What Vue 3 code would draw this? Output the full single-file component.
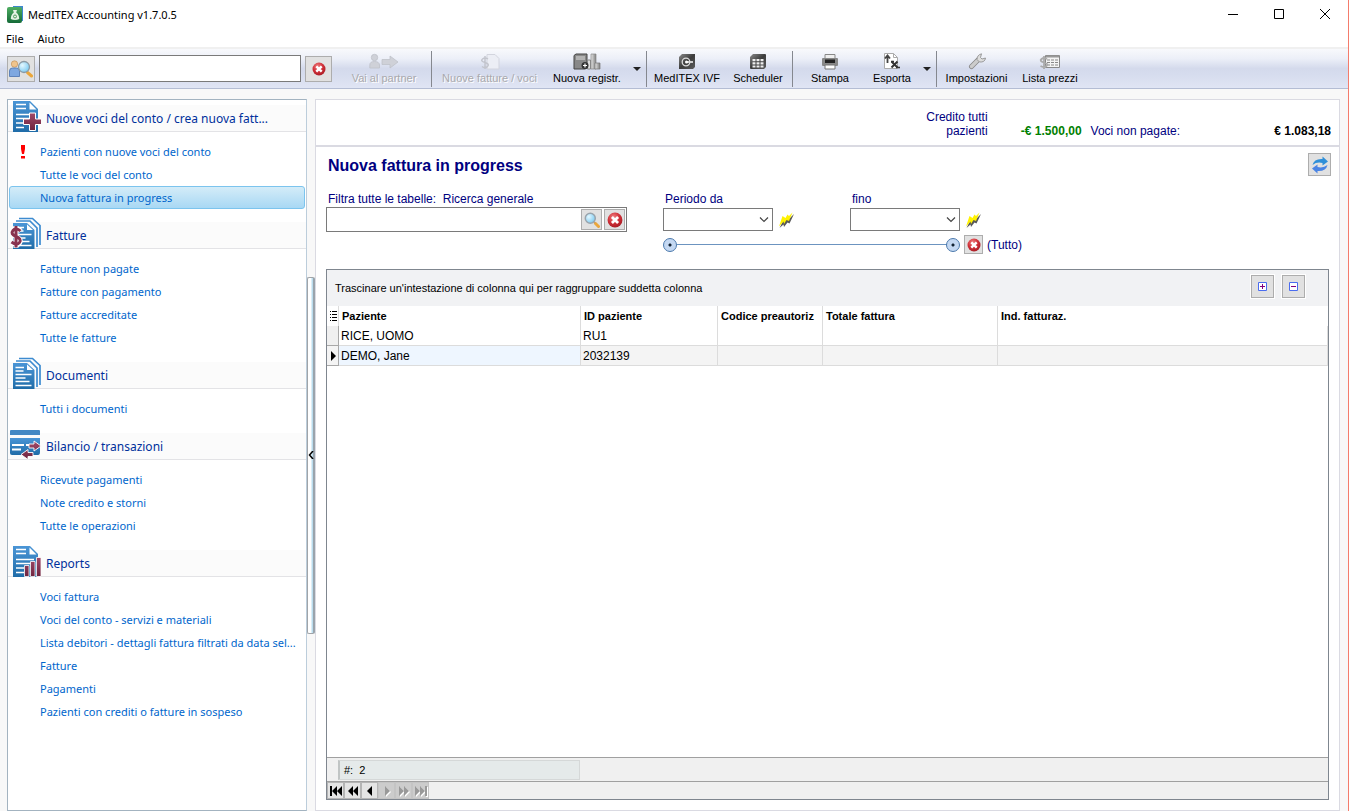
<template>
    <div class="window">
        <svg class="sprite" width="0" height="0" aria-hidden="true">
            <defs>
                <linearGradient id="blue" x1="0" y1="0" x2="0" y2="1">
                    <stop offset="0" stop-color="#4a95d6" />
                    <stop offset="1" stop-color="#1f6ca8" />
                </linearGradient>
                <linearGradient id="wine" x1="0" y1="0" x2="0" y2="1">
                    <stop offset="0" stop-color="#a04a68" />
                    <stop offset="1" stop-color="#6e2440" />
                </linearGradient>
                <linearGradient id="green" x1="0" y1="0" x2="0" y2="1">
                    <stop offset="0" stop-color="#4fae62" />
                    <stop offset="1" stop-color="#156b38" />
                </linearGradient>
                <linearGradient id="dark" x1="0" y1="0" x2="1" y2="1">
                    <stop offset="0" stop-color="#8a8a8a" />
                    <stop offset="0.5" stop-color="#3c3c3c" />
                    <stop offset="1" stop-color="#5c5c5c" />
                </linearGradient>
                <linearGradient id="grey" x1="0" y1="0" x2="1" y2="0">
                    <stop offset="0" stop-color="#e6e6e6" />
                    <stop offset="1" stop-color="#808080" />
                </linearGradient>
                <radialGradient id="red" cx="0.4" cy="0.3" r="0.8">
                    <stop offset="0" stop-color="#ef8080" />
                    <stop offset="0.5" stop-color="#d03038" />
                    <stop offset="1" stop-color="#a01820" />
                </radialGradient>
                <radialGradient id="lens" cx="0.35" cy="0.35" r="0.8">
                    <stop offset="0" stop-color="#e4f8ff" />
                    <stop offset="1" stop-color="#6cc4f0" />
                </radialGradient>
            </defs>
            <symbol id="i-clear" viewBox="0 0 14 14">
                <circle cx="7" cy="7" r="6.5" fill="url(#red)" />
                <path d="M4.3 4.3l5.4 5.4M9.7 4.3l-5.4 5.4" stroke="#fff" stroke-width="2.4" />
            </symbol>
            <symbol id="i-lens" viewBox="0 0 16 16">
                <path d="M10 10l1.5 1.5" stroke="#999" stroke-width="2" />
                <path d="M11.5 11.5l3 3" stroke="#eaa63c" stroke-width="3" stroke-linecap="round" />
                <circle cx="6.3" cy="6.3" r="5" fill="url(#lens)" stroke="#9aa4ac" stroke-width="1.5" />
            </symbol>
            <symbol id="i-bolt" viewBox="0 0 16 16">
                <path d="M16 2l-4.500 9.500-2-1L6 15l-.5-2.500L1.500 16 5 9l7-3z" fill="#222" opacity=".75" />
                <path d="M14.500.5L11 9 8.500 8 6 12 5.500 9.500 1 14.500 4.500 4l3 2L9.500 2.500l1.500 1.500z" fill="#fff200" />
            </symbol>
        </svg>

        <header class="titlebar">
            <svg class="app-icon" viewBox="0 0 16 17">
                <path d="M6 0h10v15H6z" fill="#3f87cf" />
                <rect x="0" y="1" width="15" height="16" rx="2" fill="url(#green)" />
                <path d="M6 4h4l-.8 2.500c2 1.500 3 3.500 3 6.500q-4.200 2-8.400 0c0-3 1-5 3-6.500z" fill="#e3f1e2" />
                <circle cx="8" cy="10.500" r="1.500" fill="none" stroke="#4f9c5c" />
            </svg>
            <span class="app-name">MedITEX Accounting v1.7.0.5</span>
            <div class="window-buttons">
                <button type="button" aria-label="Riduci a icona">
                    <svg viewBox="0 0 12 12"><path d="M1 6.500h10" /></svg>
                </button>
                <button type="button" aria-label="Ingrandisci">
                    <svg viewBox="0 0 12 12"><path d="M1.500 1.500h9v9h-9z" /></svg>
                </button>
                <button type="button" aria-label="Chiudi">
                    <svg viewBox="0 0 12 12"><path d="M1 1l10 10M11 1L1 11" /></svg>
                </button>
            </div>
        </header>

        <nav class="menubar">
            <button type="button">File</button>
            <button type="button">Aiuto</button>
        </nav>

        <div class="toolbar">
            <button type="button" class="box-button patient-search" aria-label="Cerca paziente">
                <svg viewBox="0 0 24 18">
                    <circle cx="5.500" cy="4" r="3.200" fill="#f0c48c" stroke="#c08c50" stroke-width=".6" />
                    <path d="M.5 16.500V11q0-3 3-3h4q3 0 3 3v5.500z" fill="#7fa8e0" stroke="#4a72b0" stroke-width=".8" />
                    <path d="M18.500 12.500l4 3.500" stroke="#eaa63c" stroke-width="3" stroke-linecap="round" />
                    <circle cx="15" cy="7" r="5.500" fill="url(#lens)" stroke="#8d9aa4" stroke-width="1.300" />
                </svg>
            </button>
            <input v-model="patientQuery" class="patient-input" type="text" aria-label="Paziente">
            <button type="button" class="box-button clear-patient" aria-label="Cancella" @click="patientQuery = ''">
                <svg viewBox="0 0 14 14"><use href="#i-clear" /></svg>
            </button>

            <button type="button" class="tool tool-partner" disabled>
                <svg viewBox="0 0 30 18">
                    <g fill="#cfd1d8" stroke="#bfc1c9" stroke-width=".8">
                        <circle cx="5.500" cy="4.500" r="3.200" />
                        <path d="M.8 15v-3q0-3.500 4.700-3.500t5 3.500v3z" />
                        <path d="M13 6.500h8V3l8 6-8 6v-3.500h-8z" />
                    </g>
                </svg>
                Vai al partner
            </button>
            <span class="divider"></span>
            <button type="button" class="tool tool-new" disabled>
                <svg viewBox="0 0 20 18">
                    <path d="M7 1.500h8l4 4V16H7z" fill="#eceef5" stroke="#d3d5de" />
                    <path d="M8 6q-3-2-5.500 0t2.500 3.500 2.500 4-5.500 0M5 3v13" fill="none" stroke="#c3c5cd" stroke-width="1.500" />
                </svg>
                Nuove fatture / voci
            </button>
            <button type="button" class="tool tool-register">
                <svg viewBox="0 0 28 18">
                    <path d="M1 2.500L3 1h11v14l-2 1H1z" fill="#888" stroke="#444" />
                    <path d="M3 4h9M3 6h9" stroke="#ddd" />
                    <path d="M14.500 7h3v9h-3z" fill="#ddd" stroke="#888" />
                    <path d="M18 1h5v15h-5z" fill="url(#grey)" stroke="#888" stroke-width=".7" />
                    <path d="M22 10h5v6h-5z" fill="url(#grey)" stroke="#777" stroke-width=".7" />
                    <circle cx="12" cy="12.500" r="3.500" fill="#333" />
                    <path d="M12 10.500v4M10 12.500h4" stroke="#fff" stroke-width="1.200" />
                </svg>
                Nuova registr.
            </button>
            <button type="button" class="arrow" aria-label="Altre registrazioni"></button>
            <span class="divider"></span>
            <button type="button" class="tool tool-ivf">
                <svg viewBox="0 0 18 18">
                    <path d="M4 1h13v13l-2 2H1V4z" fill="url(#dark)" />
                    <circle cx="8" cy="9" r="3.800" fill="none" stroke="#ddd" stroke-width="1.300" />
                    <path d="M8 9h7" stroke="#ddd" stroke-width="1.800" />
                    <circle cx="8.500" cy="9" r="1.500" fill="#fff" />
                </svg>
                MedITEX IVF
            </button>
            <button type="button" class="tool tool-scheduler">
                <svg viewBox="0 0 18 18">
                    <path d="M4 1h12q1 0 1 1v12l-2 2H2q-1 0-1-1V4z" fill="url(#dark)" />
                    <path d="M3.500 6h3v2.300h-3zm4 0h3v2.300h-3zm4 0h3v2.300h-3zm-8 3.300h3v2.300h-3zm4 0h3v2.300h-3zm4 0h3v2.300h-3zm-8 3.200h3v2h-3zm4 0h3v2h-3zm4 0h3v2h-3z" fill="#eee" />
                </svg>
                Scheduler
            </button>
            <span class="divider"></span>
            <button type="button" class="tool tool-print">
                <svg viewBox="0 0 18 18">
                    <path d="M4 1.500h10V7H4z" fill="#eee" stroke="#888" />
                    <rect x="1" y="5" width="16" height="8" rx="1" fill="#888" />
                    <path d="M4 6.500h10v3.500H4z" fill="#222" />
                    <path d="M4 12h10v4H4z" fill="#fff" stroke="#777" />
                </svg>
                Stampa
            </button>
            <button type="button" class="tool tool-export">
                <svg viewBox="0 0 18 18">
                    <path d="M1.500.5h9l4 4v11h-13z" fill="#fff" stroke="#aaa" />
                    <path d="M10.500.5v4h4" fill="none" stroke="#aaa" />
                    <path d="M4.500 10V3M2 5.500L4.500 2.500 7 5.500" fill="none" stroke="#444" stroke-width="1.800" />
                    <path d="M8.500 8.500l6 6M14.500 8.500l-6 6" stroke="#333" stroke-width="2" />
                    <path d="M8 8.500h3M13 14.500h4" stroke="#333" stroke-width="1.500" />
                </svg>
                Esporta
            </button>
            <button type="button" class="arrow" aria-label="Altre esportazioni"></button>
            <span class="divider"></span>
            <button type="button" class="tool tool-settings">
                <svg viewBox="0 0 18 18">
                    <path d="M3.500 13.500L10 7" stroke="#888" stroke-width="5" stroke-linecap="round" />
                    <path d="M3.500 13.500L10 7" stroke="#ccc" stroke-width="3.400" stroke-linecap="round" />
                    <path d="M9 6.500Q9 2 13.500.800L12.500 4.500l1.500 1.500 3.500-1Q17 9.500 11.500 9z" fill="#ddd" stroke="#888" stroke-width=".8" />
                </svg>
                Impostazioni
            </button>
            <button type="button" class="tool tool-prices">
                <svg viewBox="0 0 22 18">
                    <path d="M6.500 2.500h14v12h-14z" fill="#f4f4f4" stroke="#888" />
                    <path d="M7 3.500h13" stroke="#999" stroke-width="2" />
                    <path d="M8 7h11M8 9.500h11M8 12h11" stroke="#888" stroke-dasharray="3 1" />
                    <path d="M8 6Q5 4 2.500 6T5 9.500 7.500 13t-6 0M5 3v13" fill="none" stroke="#aaa" stroke-width="1.800" />
                </svg>
                Lista prezzi
            </button>
        </div>

        <div class="workspace">
            <aside class="sidebar">
                <section v-for="group in groups" :key="group.title" class="group">
                    <h2>
                        <svg class="group-icon" viewBox="0 0 32 32">
                            <template v-if="group.icon === 'add' || group.icon === 'report'">
                                <path d="M4 1h17l8 8v23H4z" fill="url(#blue)" />
                                <path d="M20.500 2.500v7h7z" fill="#fff" />
                                <path d="M7 4.500h10M7 8.500h10M7 14.500h18M7 18.500h18M7 23h8M7 27.500h8" stroke="#fff" stroke-width="1.600" />
                            </template>
                            <template v-else-if="group.icon === 'invoice' || group.icon === 'document'">
                                <path d="M10 1.500h13.500l7.500 7V28M7 4h14l7 7v19" fill="none" stroke="#3d8bd0" stroke-width="1.700" />
                                <path d="M4 6h14l7.500 7v19H4z" fill="url(#blue)" />
                                <path d="M18 7.500V13h6z" fill="#fff" />
                                <path d="M6.500 10.500h8.500M6.500 14h8M6.500 17.500h16M6.500 21h10M6.500 24.500h14M6.500 28.500h16" stroke="#fff" stroke-width="1.600" />
                            </template>
                            <template v-else>
                                <path d="M2 2h28q1 0 1 1v4H1V3q0-1 1-1z" fill="#4388c4" />
                                <path d="M1 10h30v14q0 3-2 3H3q-2 0-2-2z" fill="url(#blue)" />
                                <path d="M3 17h12M17 17h6M3 21.500h9" stroke="#fff" stroke-width="1.800" />
                            </template>
                            <path v-if="group.icon === 'add'" d="M20.500 13h6v6h6v5.500h-6v6h-6v-6h-6v-5.500h6z" fill="url(#wine)" stroke="#fff" />
                            <g v-if="group.icon === 'invoice'" fill="none">
                                <path d="M12 14Q7 9.500 4 13t3 6.500 3.500 6.500-8-.5M7 9v22" stroke="#fff" stroke-width="5" />
                                <path d="M11.500 14Q7 10 4 13.500t3 6 3.500 6-8-.5M7 9v21.500" stroke="#88324f" stroke-width="3" />
                            </g>
                            <path v-if="group.icon === 'balance'" d="M20 16h5v-3l7 5-7 5v-3h-5zM24 24.500h-5v-3l-7 5 7 5v-3h5z" fill="url(#wine)" stroke="#fff" stroke-width=".9" />
                            <path v-if="group.icon === 'report'" d="M15.500 20.500H20v11h-4.500zM21.500 16.500H26v15h-4.500zM27.500 12.500h4.500v19h-4.500z" fill="url(#wine)" stroke="#fff" stroke-width=".8" />
                        </svg>
                        <span>{{ group.title }}</span>
                    </h2>
                    <ul>
                        <li v-for="link in group.links" :key="link">
                            <a href="#" :class="{ selected: selected === group.icon + link }"
                                @click.prevent="selected = group.icon + link">
                                <svg v-if="link === alertLink" class="alert" viewBox="0 0 6 14">
                                    <path d="M1 0h4v4L4 9H2L1 4zM1 11h4v2.500H1z" fill="#f00" />
                                </svg>
                                <span>{{ link }}</span>
                            </a>
                        </li>
                    </ul>
                </section>
            </aside>

            <div class="splitter">
                <button type="button" aria-label="Comprimi pannello">
                    <svg viewBox="0 0 6 8"><path d="M5 0L1.500 4 5 8" fill="none" stroke="#000" stroke-width="1.500" /></svg>
                </button>
            </div>

            <main class="content">
                <div class="summary">
                    <span class="credit-label">Credito tutti pazienti</span>
                    <strong class="credit">-€ 1.500,00</strong>
                    <span class="unpaid-label">Voci non pagate:</span>
                    <strong class="unpaid">€ 1.083,18</strong>
                </div>

                <div class="heading">
                    <h1>Nuova fattura in progress</h1>
                    <button type="button" class="box-button refresh" aria-label="Aggiorna">
                        <svg viewBox="0 0 18 18">
                            <path d="M1.500 9Q3 2.500 11.500 3V.5L17 5.500l-5.500 4V7Q6 5.500 1.500 9z" fill="#2f8fd8" />
                            <path d="M16.500 9Q15 15.500 6.500 15v2.500L1 12.500l5.500-4V11q5.500 1.500 10-2z" fill="#4a84e4" />
                        </svg>
                    </button>
                </div>

                <div class="filters">
                    <div class="search">
                        <label for="search">Filtra tutte le tabelle:&nbsp; Ricerca generale</label>
                        <div class="search-box">
                            <input id="search" v-model="query" type="text">
                            <button type="button" class="box-button" aria-label="Cerca">
                                <svg viewBox="0 0 16 16"><use href="#i-lens" /></svg>
                            </button>
                            <button type="button" class="box-button" aria-label="Cancella filtro" @click="query = ''">
                                <svg viewBox="0 0 14 14"><use href="#i-clear" /></svg>
                            </button>
                        </div>
                    </div>
                    <div class="period">
                        <div class="dates">
                            <div v-for="date in dates" :key="date.id" class="date">
                                <label :for="date.id">{{ date.label }}</label>
                                <div class="date-row">
                                    <div class="select">
                                        <select :id="date.id">
                                            <option value=""></option>
                                        </select>
                                        <svg viewBox="0 0 10 6"><path d="M1 .5l4 4 4-4" fill="none" stroke="#444" stroke-width="1.200" /></svg>
                                    </div>
                                    <button type="button" class="bolt" aria-label="Imposta data">
                                        <svg viewBox="0 0 16 16"><use href="#i-bolt" /></svg>
                                    </button>
                                </div>
                            </div>
                        </div>
                        <div class="range-row">
                            <div class="range">
                                <input v-model="from" type="range" min="0" max="100" aria-label="Inizio periodo">
                                <input v-model="to" type="range" min="0" max="100" aria-label="Fine periodo">
                            </div>
                            <button type="button" class="box-button" aria-label="Azzera periodo" @click="resetRange">
                                <svg viewBox="0 0 14 14"><use href="#i-clear" /></svg>
                            </button>
                            <span>(Tutto)</span>
                        </div>
                    </div>
                </div>

                <div class="grid">
                    <div class="group-panel">
                        <span>Trascinare un'intestazione di colonna qui per raggruppare suddetta colonna</span>
                        <button type="button" class="box-button" aria-label="Espandi tutto">
                            <svg viewBox="0 0 9 9"><path d="M.5.5h8v8h-8z" fill="#fff" stroke="#4a6cf0" /><path d="M2 4.500h5M4.500 2v5" stroke="#800080" /></svg>
                        </button>
                        <button type="button" class="box-button" aria-label="Comprimi tutto">
                            <svg viewBox="0 0 9 9"><path d="M.5.5h8v8h-8z" fill="#fff" stroke="#4a6cf0" /><path d="M2 4.500h5" stroke="#800080" /></svg>
                        </button>
                    </div>
                    <div class="grid-body">
                        <table>
                            <colgroup>
                                <col class="col-mark">
                                <col class="col-patient">
                                <col class="col-id">
                                <col class="col-code">
                                <col class="col-total">
                                <col>
                            </colgroup>
                            <thead>
                                <tr>
                                    <th class="mark">
                                        <svg viewBox="0 0 7 10"><path d="M0 .5h1M0 3.500h1M0 6.500h1M0 9.500h1M2 .5h5M2 3.500h5M2 6.500h5M2 9.500h5" stroke="#000" /></svg>
                                    </th>
                                    <th v-for="column in columns" :key="column" scope="col">{{ column }}</th>
                                </tr>
                            </thead>
                            <tbody>
                                <tr v-for="row in rows" :key="row.id" :class="{ current: row.id === currentId }"
                                    @click="currentId = row.id">
                                    <td class="mark">
                                        <svg v-if="row.id === currentId" viewBox="0 0 7 10"><path d="M1 0l5 5-5 5z" /></svg>
                                    </td>
                                    <td>{{ row.name }}</td>
                                    <td>{{ row.id }}</td>
                                    <td></td>
                                    <td></td>
                                    <td></td>
                                </tr>
                            </tbody>
                        </table>
                    </div>
                    <div class="grid-footer">
                        <span class="count">#:&nbsp; {{ rows.length }}</span>
                    </div>
                    <div class="navigator">
                        <button v-for="step in steps" :key="step.label" type="button" :aria-label="step.label"
                            :disabled="step.disabled">
                            <svg viewBox="0 0 12 10">
                                <path v-if="step.disabled" class="shade" :d="step.path" />
                                <path :d="step.path" />
                            </svg>
                        </button>
                    </div>
                </div>
            </main>
        </div>
    </div>
</template>

<script setup>
import { ref } from 'vue';

const patientQuery = ref('');
const query = ref('');
const from = ref(0);
const to = ref(100);
const currentId = ref('2032139');
const selected = ref('addNuova fattura in progress');
const alertLink = 'Pazienti con nuove voci del conto';

const groups = [
    {
        title: 'Nuove voci del conto / crea nuova fatt...',
        icon: 'add',
        links: ['Pazienti con nuove voci del conto', 'Tutte le voci del conto', 'Nuova fattura in progress']
    },
    {
        title: 'Fatture',
        icon: 'invoice',
        links: ['Fatture non pagate', 'Fatture con pagamento', 'Fatture accreditate', 'Tutte le fatture']
    },
    {
        title: 'Documenti',
        icon: 'document',
        links: ['Tutti i documenti']
    },
    {
        title: 'Bilancio / transazioni',
        icon: 'balance',
        links: ['Ricevute pagamenti', 'Note credito e storni', 'Tutte le operazioni']
    },
    {
        title: 'Reports',
        icon: 'report',
        links: [
            'Voci fattura',
            'Voci del conto - servizi e materiali',
            'Lista debitori - dettagli fattura filtrati da data sel...',
            'Fatture',
            'Pagamenti',
            'Pazienti con crediti o fatture in sospeso'
        ]
    }
];

const dates = [
    { id: 'date-from', label: 'Periodo da' },
    { id: 'date-to', label: 'fino' }
];

const columns = ['Paziente', 'ID paziente', 'Codice preautoriz', 'Totale fattura', 'Ind. fatturaz.'];

const rows = [
    { name: 'RICE, UOMO', id: 'RU1' },
    { name: 'DEMO, Jane', id: '2032139' }
];

const steps = [
    { label: 'Primo', path: 'M0 0h2v10H0zM7 0v10L2 5zM12 0v10L7 5z' },
    { label: 'Pagina precedente', path: 'M6 0v10L1 5zM11 0v10L6 5z' },
    { label: 'Precedente', path: 'M8 0v10L3 5z' },
    { label: 'Successivo', path: 'M4 0v10l5-5z', disabled: true },
    { label: 'Pagina successiva', path: 'M1 0v10l5-5zM6 0v10l5-5z', disabled: true },
    { label: 'Ultimo', path: 'M0 0v10l5-5zM5 0v10l5-5zM10 0h2v10h-2z', disabled: true }
];

const resetRange = () => {
    from.value = 0;
    to.value = 100;
};
</script>

<style>
body {
    background: #f8f8f8;
}
</style>

<style scoped>
* {
    box-sizing: border-box;
}

.window {
    display: flex;
    flex-direction: column;
    min-height: 100vh;
    border-right: 1px solid #f47c6c;
    font-family: "Liberation Sans", Arial, sans-serif;
    font-size: 12px;
    color: #000;
    background: #f8f8f8;
}

.sprite {
    position: absolute;
}

svg {
    display: block;
    flex: none;
}

button {
    padding: 0;
    border: 0;
    background: none;
    font: inherit;
    color: inherit;
}

h1,
h2,
ul {
    margin: 0;
    padding: 0;
}

.titlebar {
    display: flex;
    align-items: center;
    height: 28px;
    padding-left: 7px;
    background: #fff;
    font-family: "Noto Sans", "Open Sans", sans-serif;
    font-size: 11px;
}

.app-icon {
    width: 16px;
    height: 17px;
    margin-right: 5px;
}

.window-buttons {
    display: flex;
    margin-left: auto;
}

.window-buttons button {
    display: grid;
    place-items: center;
    width: 46px;
    height: 28px;
}

.window-buttons svg {
    width: 12px;
    height: 12px;
    fill: none;
    stroke: #000;
}

.menubar {
    display: flex;
    gap: 14px;
    height: 19px;
    padding: 2px 0 0 6px;
    background: #fff;
    font-family: "Noto Sans", "Open Sans", sans-serif;
    font-size: 11px;
}

.toolbar {
    display: flex;
    align-items: center;
    height: 42px;
    padding-left: 7px;
    border-top: 2px solid #f0f0f0;
    border-bottom: 1px solid #b4bdd4;
    background: linear-gradient(#f8f9fc 0%, #eceff8 25%, #d4daec 50%, #d6dcee 65%, #e0e5f4 100%);
    font-size: 11px;
}

.box-button {
    display: grid;
    flex: none;
    place-items: center;
    border: 1px solid #adadad;
    background: #e1e1e1;
}

.patient-search {
    width: 28px;
    height: 26px;
}

.patient-search svg {
    width: 24px;
    height: 18px;
}

.patient-input {
    width: 262px;
    height: 27px;
    margin: 0 4px;
    border: 1px solid #7a7a7a;
    background: #fff;
}

.clear-patient {
    width: 27px;
    height: 26px;
}

.clear-patient svg {
    width: 14px;
    height: 14px;
}

.tool {
    display: flex;
    flex: none;
    flex-direction: column;
    align-items: center;
    line-height: 14px;
    white-space: nowrap;
}

.tool svg {
    width: auto;
    height: 18px;
}

.tool:disabled {
    color: #a9a9ad;
    text-shadow: 1px 1px #fff;
}

.tool-partner {
    width: 80px;
    margin: 0 7px 0 12px;
}

.tool-new {
    width: 115px;
}

.tool-register {
    width: 80px;
}

.tool-ivf {
    width: 80px;
}

.tool-scheduler {
    width: 62px;
    margin-right: 3px;
}

.tool-print {
    width: 74px;
}

.tool-export {
    width: 50px;
}

.tool-settings {
    width: 79px;
}

.tool-prices {
    width: 68px;
}

.divider {
    width: 1px;
    height: 36px;
    background: #85888f;
}

.arrow {
    width: 19px;
    height: 36px;
}

.arrow::before {
    content: "";
    display: block;
    width: 0;
    margin: 0 auto;
    border: 4px solid transparent;
    border-top-color: #222;
    border-bottom: 0;
}

.workspace {
    display: flex;
    flex: 1;
    padding: 10px 8px 0 7px;
}

.sidebar {
    width: 300px;
    border: 1px solid #a3b3c0;
    border-right-color: #bccddb;
    background: #fff;
    font-family: "Noto Sans", "Open Sans", sans-serif;
}

.group {
    margin-bottom: 7px;
}

.group h2 {
    display: flex;
    height: 32px;
    padding-left: 1px;
    border-bottom: 1px solid #e3e3e6;
    background: linear-gradient(#fbfbfb, #fbfbfb) bottom / 100% 26px no-repeat;
    font-size: 12px;
    font-weight: 400;
    color: #00309c;
}

.group-icon {
    width: 32px;
    height: 32px;
    margin-right: 5px;
}

.group h2 span {
    padding-top: 7px;
    line-height: 24px;
    white-space: nowrap;
}

.group ul {
    padding: 8px 1px 1px;
    list-style: none;
}

.group a {
    display: flex;
    align-items: center;
    height: 23px;
    padding-left: 30px;
    border: 1px solid transparent;
    border-radius: 3px;
    font-size: 11px;
    color: #0066cc;
    text-decoration: none;
    white-space: nowrap;
}

.group a.selected {
    border-color: #7cc4ee;
    background: linear-gradient(#d4ecf8, #a8d8f4);
}

.alert {
    width: 6px;
    height: 14px;
    margin: 0 14px 0 -20px;
}

.splitter {
    display: flex;
    align-items: center;
    width: 8px;
}

.splitter button {
    display: grid;
    place-items: center;
    width: 8px;
    height: 357px;
    border: 1px solid #a0a4a8;
    border-right: 2px solid #9aa4ac;
    border-radius: 2px;
    background: linear-gradient(90deg, #fff 50%, #a8d4ea);
}

.splitter svg {
    width: 6px;
    height: 8px;
}

.content {
    display: flex;
    flex: 1;
    flex-direction: column;
    min-width: 0;
    border: 1px solid #dadae2;
    background: #fff;
    color: #000080;
}

.summary {
    display: flex;
    justify-content: flex-end;
    align-items: flex-end;
    height: 47px;
    padding: 0 8px 7px;
    border-bottom: 2px solid #dadae2;
    line-height: 14px;
}

.credit-label {
    width: 70px;
    text-align: right;
}

.credit {
    width: 94px;
    text-align: right;
    color: #008000;
}

.unpaid-label {
    margin-left: 9px;
}

.unpaid {
    width: 151px;
    text-align: right;
    color: #000;
}

.heading {
    display: flex;
    justify-content: space-between;
    align-items: center;
    padding: 6px 8px 0 12px;
}

h1 {
    padding-top: 2px;
    font-size: 16px;
    line-height: 20px;
}

.refresh {
    width: 23px;
    height: 23px;
}

.refresh svg {
    width: 18px;
    height: 18px;
}

.filters {
    display: flex;
    gap: 36px;
    padding: 16px 10px 15px;
}

.filters label {
    display: block;
    padding-left: 2px;
    line-height: 15px;
}

.search {
    width: 301px;
}

.search-box {
    display: flex;
    gap: 2px;
    height: 25px;
    padding: 1px;
    border: 1px solid #7a7a7a;
}

.search-box input {
    flex: 1;
    min-width: 0;
    border: 0;
    outline: 0;
}

.search-box button {
    width: 21px;
}

.search-box svg {
    width: 16px;
    height: 16px;
}

.dates {
    display: flex;
}

.date {
    width: 187px;
}

.date-row {
    display: flex;
    align-items: center;
    gap: 5px;
    padding-top: 1px;
}

.select {
    display: grid;
    align-items: center;
    width: 110px;
}

.select select,
.select svg {
    grid-area: 1 / 1;
}

.select select {
    height: 23px;
    border: 1px solid #7a7a7a;
    border-radius: 0;
    background: #fff;
    appearance: none;
}

.select svg {
    justify-self: end;
    width: 10px;
    height: 6px;
    margin-right: 4px;
    pointer-events: none;
}

.bolt svg {
    width: 16px;
    height: 16px;
}

.range-row {
    display: flex;
    align-items: center;
    gap: 4px;
    padding-top: 4px;
}

.range-row button {
    width: 19px;
    height: 19px;
}

.range-row svg {
    width: 14px;
    height: 14px;
}

.range {
    display: grid;
    align-items: center;
    width: 297px;
    background: linear-gradient(#6c94c0, #6c94c0) center / 270px 1px no-repeat;
}

.range input {
    grid-area: 1 / 1;
    width: 100%;
    height: 14px;
    margin: 0;
    background: none;
    appearance: none;
    pointer-events: none;
}

.range input::-webkit-slider-thumb {
    width: 14px;
    height: 14px;
    border: 1px solid #4a78ac;
    border-radius: 50%;
    background: radial-gradient(circle, #123 1px, #c4d8f2 2px);
    appearance: none;
    pointer-events: auto;
}

.grid {
    display: flex;
    flex: 1;
    flex-direction: column;
    margin: 0 10px 10px;
    border: 1px solid #7f868f;
    color: #000;
}

.group-panel {
    display: flex;
    align-items: center;
    gap: 8px;
    height: 36px;
    padding: 0 23px 0 8px;
    background: #f1f2f4;
    font-size: 11px;
}

.group-panel span {
    margin-right: auto;
}

.group-panel button {
    width: 23px;
    height: 23px;
    margin-bottom: 3px;
    outline: 1px solid #fff;
}

.group-panel svg {
    width: 9px;
    height: 9px;
}

.grid-body {
    flex: 1;
}

table {
    width: 100%;
    border-collapse: separate;
    border-spacing: 0;
    table-layout: fixed;
}

.col-mark {
    width: 12px;
}

.col-patient {
    width: 242px;
}

.col-id {
    width: 137px;
}

.col-code {
    width: 105px;
}

.col-total {
    width: 175px;
}

th,
td {
    height: 20px;
    padding: 0 2px;
    border-right: 1px solid #dcdcdc;
    overflow: hidden;
    text-align: left;
    white-space: nowrap;
}

th {
    padding: 0 3px;
    font-size: 11px;
}

th:last-child {
    border-right-color: transparent;
}

td {
    border-bottom: 1px solid #dcdcdc;
}

.mark {
    padding: 0 1px 0 3px;
}

td.mark {
    border-color: #a8a8a8;
    background: #f0f0f0;
}

.mark svg {
    width: 7px;
    height: 10px;
}

.current td {
    background: #f4f4f4;
}

.current td:nth-child(2) {
    background: #eef6ff;
}

.grid-footer {
    display: flex;
    height: 24px;
    padding: 2px 0 1px 11px;
    border-top: 1px solid #a0a0a0;
    background: #f0f0f0;
    font-size: 11px;
}

.count {
    width: 242px;
    padding-left: 4px;
    border: 1px solid #d5d8d8;
    border-left: 2px solid #c0c4c4;
    background: #e5eaea;
    line-height: 19px;
}

.navigator {
    display: flex;
    height: 18px;
    border-top: 1px solid #a0a0a0;
    background: #f0f0f0;
}

.navigator button {
    display: grid;
    place-items: center;
    width: 17px;
    border: 1px solid #b4b4b4;
    background: #e4e4e4;
}

.navigator button:disabled {
    border-color: #c4c4c4;
    background: #cccccc;
    fill: #999;
}

.navigator svg {
    width: 12px;
    height: 10px;
    overflow: visible;
}

.shade {
    fill: #fff;
    transform: translate(1px, 1px);
}
</style>
